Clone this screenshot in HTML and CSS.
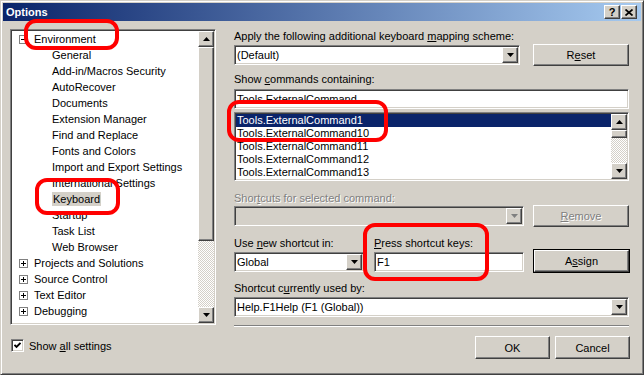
FILE: index.html
```html
<!DOCTYPE html>
<html lang="en">

<head>
    <meta charset="UTF-8">
    <title>Options</title>
    <link rel="stylesheet" href="styles.css">
</head>

<body>
    <div class="window">
        <!-- Barra de título -->
        <div class="titlebar">
            <span class="title">Options</span>
            <div class="caption-btns">
                <div class="cap-btn raised">?</div>
                <div class="cap-btn raised">
                    <svg width="8" height="7" viewBox="0 0 8 7"><path d="M0.5 0.5 L7.5 6.5 M7.5 0.5 L0.5 6.5" stroke="#000" stroke-width="1.7"/></svg>
                </div>
            </div>
        </div>

        <div class="body">
            <!-- Árvore de categorias -->
            <div class="tree sunken">
                <div class="tree-items">
                    <div class="node root"><span class="expander"><svg width="7" height="7"><path d="M1 3.5 H6" stroke="#000"/></svg></span>Environment</div>
                    <div class="node child">General</div>
                    <div class="node child">Add-in/Macros Security</div>
                    <div class="node child">AutoRecover</div>
                    <div class="node child">Documents</div>
                    <div class="node child">Extension Manager</div>
                    <div class="node child">Find and Replace</div>
                    <div class="node child">Fonts and Colors</div>
                    <div class="node child">Import and Export Settings</div>
                    <div class="node child">International Settings</div>
                    <div class="node child"><span class="selected">Keyboard</span></div>
                    <div class="node child">Startup</div>
                    <div class="node child">Task List</div>
                    <div class="node child">Web Browser</div>
                    <div class="node root"><span class="expander"><svg width="7" height="7"><path d="M1 3.5 H6 M3.5 1 V6" stroke="#000"/></svg></span>Projects and Solutions</div>
                    <div class="node root"><span class="expander"><svg width="7" height="7"><path d="M1 3.5 H6 M3.5 1 V6" stroke="#000"/></svg></span>Source Control</div>
                    <div class="node root"><span class="expander"><svg width="7" height="7"><path d="M1 3.5 H6 M3.5 1 V6" stroke="#000"/></svg></span>Text Editor</div>
                    <div class="node root"><span class="expander"><svg width="7" height="7"><path d="M1 3.5 H6 M3.5 1 V6" stroke="#000"/></svg></span>Debugging</div>
                    <div class="node root"><span class="expander"><svg width="7" height="7"><path d="M1 3.5 H6 M3.5 1 V6" stroke="#000"/></svg></span>Device Tools</div>
                </div>
                <div class="vscroll">
                    <div class="sb-btn raised"><svg width="7" height="4"><polygon points="3.5,0 7,4 0,4" fill="#000"/></svg></div>
                    <div class="sb-thumb raised tree-thumb"></div>
                    <div class="sb-track"></div>
                    <div class="sb-btn raised"><svg width="7" height="4"><polygon points="0,0 7,0 3.5,4" fill="#000"/></svg></div>
                </div>
            </div>

            <!-- Painel do teclado -->
            <div class="panel">
                <div class="label">Apply the following additional keyboard <u>m</u>apping scheme:</div>
                <div class="row row-scheme">
                    <div class="combo sunken">
                        <span class="val">(Default)</span>
                        <span class="drop raised"><svg width="7" height="4"><polygon points="0,0 7,0 3.5,4" fill="#000"/></svg></span>
                    </div>
                    <div class="btn raised"><span>R<u>e</u>set</span></div>
                </div>

                <div class="label label-gap">Show <u>c</u>ommands containing:</div>
                <div class="field sunken">Tools.ExternalCommand</div>

                <div class="list sunken">
                    <div class="list-items">
                        <div class="item active">Tools.ExternalCommand1</div>
                        <div class="item">Tools.ExternalCommand10</div>
                        <div class="item">Tools.ExternalCommand11</div>
                        <div class="item">Tools.ExternalCommand12</div>
                        <div class="item">Tools.ExternalCommand13</div>
                    </div>
                    <div class="vscroll">
                        <div class="sb-btn raised"><svg width="7" height="4"><polygon points="3.5,0 7,4 0,4" fill="#000"/></svg></div>
                        <div class="sb-thumb raised list-thumb"></div>
                        <div class="sb-track"></div>
                        <div class="sb-btn raised"><svg width="7" height="4"><polygon points="0,0 7,0 3.5,4" fill="#000"/></svg></div>
                    </div>
                </div>

                <div class="label label-disabled">Shor<u>t</u>cuts for selected command:</div>
                <div class="row row-current">
                    <div class="combo sunken disabled">
                        <span class="val"></span>
                        <span class="drop raised"><svg width="7" height="4"><polygon points="0,0 7,0 3.5,4" fill="#808080"/></svg></span>
                    </div>
                    <div class="btn raised disabled"><span><u>R</u>emove</span></div>
                </div>

                <div class="row-new">
                    <div class="label">Use <u>n</u>ew shortcut in:</div>
                    <div class="label"><u>P</u>ress shortcut keys:</div>
                    <div></div>
                    <div class="combo sunken">
                        <span class="val">Global</span>
                        <span class="drop raised"><svg width="7" height="4"><polygon points="0,0 7,0 3.5,4" fill="#000"/></svg></span>
                    </div>
                    <div class="field sunken">F1</div>
                    <div class="btn raised default"><span>A<u>s</u>sign</span></div>
                </div>

                <div class="label label-used">Shortcut c<u>u</u>rrently used by:</div>
                <div class="combo sunken combo-used">
                    <span class="val">Help.F1Help (F1 (Global))</span>
                    <span class="drop raised"><svg width="7" height="4"><polygon points="0,0 7,0 3.5,4" fill="#000"/></svg></span>
                </div>

                <div class="separator"></div>
            </div>

            <!-- Rodapé -->
            <div class="check-row">
                <span class="checkbox sunken"><svg width="7" height="7" viewBox="0 0 7 7"><path d="M0.5 2.8 L2.5 4.8 L6.5 0.8" stroke="#000" stroke-width="1.9" fill="none"/></svg></span>
                <span>Show <u>a</u>ll settings</span>
            </div>
            <div class="dialog-btns">
                <div class="btn raised wide"><span>OK</span></div>
                <div class="btn raised wide"><span>Cancel</span></div>
            </div>
        </div>
    </div>

    <!-- Marcações vermelhas -->
    <div class="mark mark-env"></div>
    <div class="mark mark-kbd"></div>
    <div class="mark mark-cmd"></div>
    <div class="mark mark-key"></div>
</body>

</html>
```

FILE: styles.css
```css
/* RESET */
* {
    margin: 0;
    padding: 0;
    box-sizing: border-box;
}

body {
    position: relative;
    width: 644px;
    height: 375px;
    overflow: hidden;
    font-family: "Liberation Sans", Arial, sans-serif;
    font-size: 11px;
    color: #000;
    background: #d4d0c8;
}

u {
    text-decoration: underline;
    text-underline-offset: 1px;
}

/* BORDAS 3D */
.raised {
    background: #d4d0c8;
    border: 1px solid;
    border-color: #fff #404040 #404040 #fff;
    box-shadow: inset -1px -1px #808080, inset 1px 1px #d4d0c8;
}

.sunken {
    background: #fff;
    border: 1px solid;
    border-color: #808080 #fff #fff #808080;
    box-shadow: inset 1px 1px #404040, inset -1px -1px #d4d0c8;
    padding: 1px;
}

/* JANELA */
.window {
    width: 644px;
    height: 375px;
    border: 1px solid;
    border-color: #d4d0c8 #404040 #404040 #d4d0c8;
    box-shadow: inset 1px 1px #fff, inset -1px -1px #808080;
    padding: 2px;
}

.titlebar {
    height: 18px;
    display: flex;
    align-items: center;
    justify-content: space-between;
    padding: 0 4px 0 3px;
    background: linear-gradient(to right, #0a246a, #a6caf0);
}

.title {
    color: #fff;
    font-weight: bold;
    font-size: 11px;
}

.caption-btns {
    display: flex;
    gap: 1px;
}

.cap-btn {
    width: 16px;
    height: 14px;
    display: flex;
    align-items: center;
    justify-content: center;
    font-weight: bold;
    font-size: 11px;
    line-height: 12px;
}

.body {
    display: grid;
    grid-template-columns: 206px 1fr;
    grid-template-rows: 296px 23px;
    column-gap: 18px;
    row-gap: 11px;
    padding: 8px 12px 0 7px;
}

/* ÁRVORE */
.tree {
    display: flex;
    overflow: hidden;
}

.tree-items {
    flex: 1;
    overflow: hidden;
}

.node {
    height: 16px;
    line-height: 16px;
    display: flex;
    align-items: center;
    white-space: nowrap;
}

.node.root {
    padding-left: 7px;
}

.node.child {
    padding-left: 40px;
}

.expander {
    width: 9px;
    height: 9px;
    border: 1px solid #808080;
    background: #fff;
    margin-right: 6px;
    display: flex;
}

.selected {
    background: #d4d0c8;
    line-height: 14px;
    padding: 0 1px;
}

/* BARRA DE ROLAGEM */
.vscroll {
    width: 16px;
    display: flex;
    flex-direction: column;
}

.sb-btn {
    height: 16px;
    display: flex;
    align-items: center;
    justify-content: center;
}

.sb-track {
    flex: 1;
    background: repeating-conic-gradient(#d4d0c8 0 25%, #fff 0 50%) 0 0 / 2px 2px;
}

.tree-thumb {
    height: 194px;
}

.list-thumb {
    height: 8px;
}

/* PAINEL */
.panel {
    display: flex;
    flex-direction: column;
}

.label {
    height: 14px;
    line-height: 14px;
    white-space: nowrap;
}

.label-gap {
    margin-top: 6px;
}

.label-disabled {
    margin-top: 10px;
    color: #808080;
    text-shadow: 1px 1px #fff;
}

.label-used {
    margin-top: 9px;
}

.row {
    display: grid;
    align-items: center;
    height: 22px;
}

.row-scheme {
    margin-top: 1px;
    grid-template-columns: 286px 1fr;
    column-gap: 13px;
}

.row-current {
    grid-template-columns: 290px 1fr;
    column-gap: 9px;
}

.row-new {
    margin-top: 8px;
    display: grid;
    grid-template-columns: 130px 150px 1fr;
    grid-template-rows: 15px 22px;
    column-gap: 10px;
    align-items: end;
}

.combo {
    height: 20px;
    display: flex;
}

.combo .val {
    flex: 1;
    padding-left: 1px;
    line-height: 16px;
    white-space: nowrap;
}

.combo .drop {
    width: 16px;
    height: 16px;
    display: flex;
    align-items: center;
    justify-content: center;
}

.combo.disabled {
    background: #d4d0c8;
}

.combo-used {
    margin-top: 2px;
}

.field {
    height: 20px;
    line-height: 16px;
    padding-left: 2px;
    white-space: nowrap;
}

.panel > .field {
    margin-top: 3px;
}

.list {
    margin-top: 3px;
    height: 69px;
    display: flex;
}

.list-items {
    flex: 1;
    overflow: hidden;
}

.item {
    height: 13px;
    line-height: 13px;
    padding-left: 1px;
    white-space: nowrap;
}

.item.active {
    background: #0a246a;
    color: #fff;
}

.separator {
    margin-top: 8px;
    height: 2px;
    border-top: 1px solid #808080;
    border-bottom: 1px solid #fff;
}

/* BOTÕES */
.btn {
    height: 22px;
    display: flex;
    align-items: center;
    justify-content: center;
    white-space: nowrap;
}

.btn.disabled {
    color: #808080;
    text-shadow: 1px 1px #fff;
}

.btn.default {
    outline: 1px solid #000;
    outline-offset: 0;
}

.btn.wide {
    width: 75px;
    height: 23px;
}

.check-row {
    display: flex;
    align-items: center;
    gap: 5px;
    padding-left: 1px;
    margin-top: 3px;
    height: 13px;
}

.checkbox {
    width: 13px;
    height: 13px;
    display: flex;
    align-items: center;
    justify-content: center;
    padding: 0;
}

.dialog-btns {
    display: flex;
    justify-content: flex-end;
    gap: 5px;
    margin-right: -1px;
}

/* MARCAÇÕES */
.mark {
    position: absolute;
    border: 4px solid #f00;
    border-radius: 12px;
}

.mark-env {
    left: 24px;
    top: 19px;
    width: 95px;
    height: 31px;
}

.mark-kbd {
    left: 35px;
    top: 178px;
    width: 85px;
    height: 37px;
}

.mark-cmd {
    left: 227px;
    top: 100px;
    width: 161px;
    height: 42px;
}

.mark-key {
    left: 363px;
    top: 223px;
    width: 126px;
    height: 58px;
}
```
